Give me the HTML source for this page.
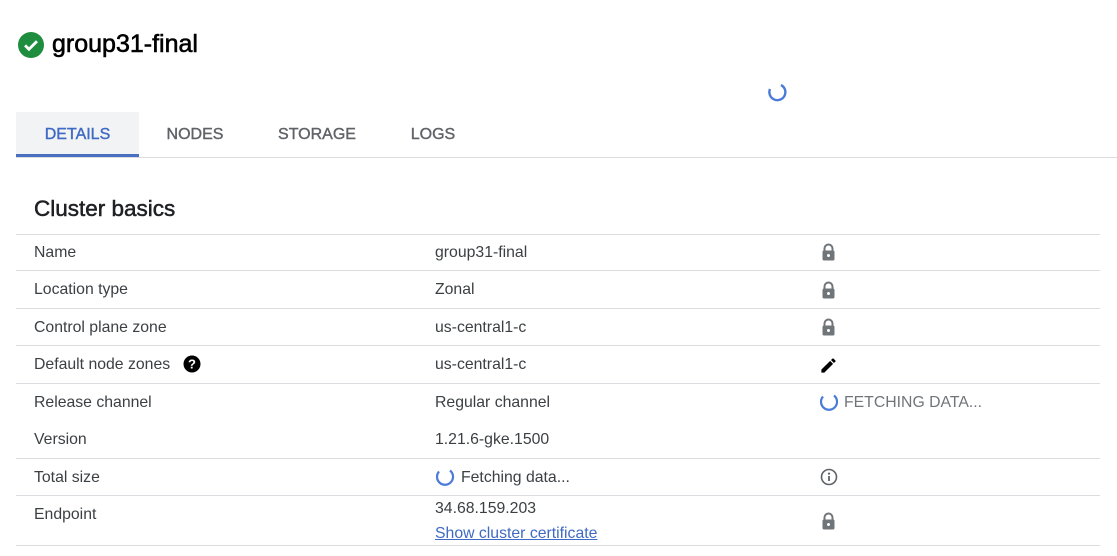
<!DOCTYPE html>
<html><head><meta charset="utf-8"><style>
*{margin:0;padding:0;box-sizing:border-box}
body{width:1117px;height:556px;background:#fff;font-family:"Liberation Sans",Arial,sans-serif;color:#202124;position:relative;overflow:hidden}
.a{position:absolute;white-space:nowrap}
.t{font-size:15.8px;color:#3c4043}
.line{position:absolute;left:16px;width:1084px;height:1px;background:#dadce0}
.tab{position:absolute;top:112px;height:45px;font-size:16px;color:#5f6368;line-height:45px;text-align:center;-webkit-text-stroke:0.4px #5f6368}
</style></head><body>
<svg class="a" style="left:18px;top:32px" width="26" height="26" viewBox="0 0 24 24"><circle cx="12" cy="12" r="12" fill="#1e8e3e"/><path d="M6.5 12.3l3.6 3.6 7.4-7.4" stroke="#fff" stroke-width="2.6" fill="none"/></svg>
<div class="a" style="left:52px;top:30px;font-size:25px;color:#000;-webkit-text-stroke:0.6px #000">group31-final</div>
<svg class="a" style="left:766px;top:81px" width="22" height="22" viewBox="0 0 22 22"><path d="M4 8 A8 8 0 1 0 15 4" stroke="#4a7bd8" stroke-width="2.4" fill="none"/></svg>
<div class="tab" style="left:16px;width:123px;background:#f1f3f4;color:#3f6ac4;-webkit-text-stroke:0.4px #3f6ac4;border-bottom:3px solid #4a6fc0">DETAILS</div>
<div class="tab" style="left:150px;width:90px">NODES</div>
<div class="tab" style="left:268px;width:98px">STORAGE</div>
<div class="tab" style="left:403px;width:60px">LOGS</div>
<div class="a" style="left:16px;top:157px;width:1101px;height:1px;background:#dadce0"></div>
<div class="a" style="left:34px;top:196px;font-size:22.5px;color:#202124;-webkit-text-stroke:0.5px #202124">Cluster basics</div>
<div class="line" style="top:234px"></div>
<div class="line" style="top:270px"></div>
<div class="line" style="top:308px"></div>
<div class="line" style="top:345px"></div>
<div class="line" style="top:383px"></div>
<div class="line" style="top:458px"></div>
<div class="line" style="top:495px"></div>
<div class="line" style="top:545px"></div>
<div class="a t" style="left:34px;top:244px">Name</div>
<div class="a t" style="left:34px;top:281px">Location type</div>
<div class="a t" style="left:34px;top:319px">Control plane zone</div>
<div class="a t" style="left:34px;top:356px">Default node zones</div>
<svg class="a" style="left:183px;top:355px" width="18" height="18" viewBox="0 0 18 18"><circle cx="9" cy="9" r="8.5" fill="#000"/><text x="9" y="13.5" font-size="13" font-weight="bold" fill="#fff" text-anchor="middle" font-family="Liberation Sans">?</text></svg>
<div class="a t" style="left:34px;top:394px">Release channel</div>
<div class="a t" style="left:34px;top:431px">Version</div>
<div class="a t" style="left:34px;top:469px">Total size</div>
<div class="a t" style="left:34px;top:506px">Endpoint</div>
<div class="a t" style="left:435px;top:244px">group31-final</div>
<div class="a t" style="left:435px;top:281px">Zonal</div>
<div class="a t" style="left:435px;top:319px">us-central1-c</div>
<div class="a t" style="left:435px;top:356px">us-central1-c</div>
<div class="a t" style="left:435px;top:394px">Regular channel</div>
<div class="a t" style="left:435px;top:431px">1.21.6-gke.1500</div>
<svg class="a" style="left:434px;top:466px" width="22" height="22" viewBox="0 0 22 22"><path d="M5 5.5 A8 8 0 1 0 16 4.5" stroke="#4a7bd8" stroke-width="2.2" fill="none"/></svg>
<div class="a t" style="left:461px;top:469px">Fetching data...</div>
<div class="a t" style="left:435px;top:500px">34.68.159.203</div>
<div class="a t" style="left:435px;top:525px;color:#3f6ac4;text-decoration:underline">Show cluster certificate</div>
<svg class="a" style="left:820px;top:243px" width="17" height="18" viewBox="0 0 17 18"><path d="M4.5 8V5.5a4 4 0 0 1 8 0V8" stroke="#70757a" stroke-width="2" fill="none"/><rect x="2.5" y="7.5" width="12" height="10" rx="1.5" fill="#70757a"/><circle cx="8.5" cy="12.5" r="1.5" fill="#fff"/></svg>
<svg class="a" style="left:820px;top:281px" width="17" height="18" viewBox="0 0 17 18"><path d="M4.5 8V5.5a4 4 0 0 1 8 0V8" stroke="#70757a" stroke-width="2" fill="none"/><rect x="2.5" y="7.5" width="12" height="10" rx="1.5" fill="#70757a"/><circle cx="8.5" cy="12.5" r="1.5" fill="#fff"/></svg>
<svg class="a" style="left:820px;top:318px" width="17" height="18" viewBox="0 0 17 18"><path d="M4.5 8V5.5a4 4 0 0 1 8 0V8" stroke="#70757a" stroke-width="2" fill="none"/><rect x="2.5" y="7.5" width="12" height="10" rx="1.5" fill="#70757a"/><circle cx="8.5" cy="12.5" r="1.5" fill="#fff"/></svg>
<svg class="a" style="left:820px;top:512px" width="17" height="18" viewBox="0 0 17 18"><path d="M4.5 8V5.5a4 4 0 0 1 8 0V8" stroke="#70757a" stroke-width="2" fill="none"/><rect x="2.5" y="7.5" width="12" height="10" rx="1.5" fill="#70757a"/><circle cx="8.5" cy="12.5" r="1.5" fill="#fff"/></svg>
<svg class="a" style="left:819px;top:356px" width="19" height="19" viewBox="0 0 24 24"><path d="M3 17.25V21h3.75L17.81 9.94l-3.75-3.75L3 17.25zM20.71 7.04a1 1 0 0 0 0-1.41l-2.34-2.34a1 1 0 0 0-1.41 0l-1.83 1.83 3.75 3.75 1.83-1.83z" fill="#000"/></svg>
<svg class="a" style="left:818px;top:391px" width="22" height="22" viewBox="0 0 22 22"><path d="M5 5.5 A8 8 0 1 0 16 4.5" stroke="#4a7bd8" stroke-width="2.2" fill="none"/></svg>
<div class="a" style="left:844px;top:394px;font-size:15.8px;color:#70757a">FETCHING DATA...</div>
<svg class="a" style="left:820px;top:468px" width="18" height="18" viewBox="0 0 18 18"><circle cx="9" cy="9" r="7.5" stroke="#5f6368" stroke-width="1.6" fill="none"/><rect x="8.1" y="8" width="1.8" height="5" fill="#5f6368"/><circle cx="9" cy="5.6" r="1.1" fill="#5f6368"/></svg>
</body></html>
